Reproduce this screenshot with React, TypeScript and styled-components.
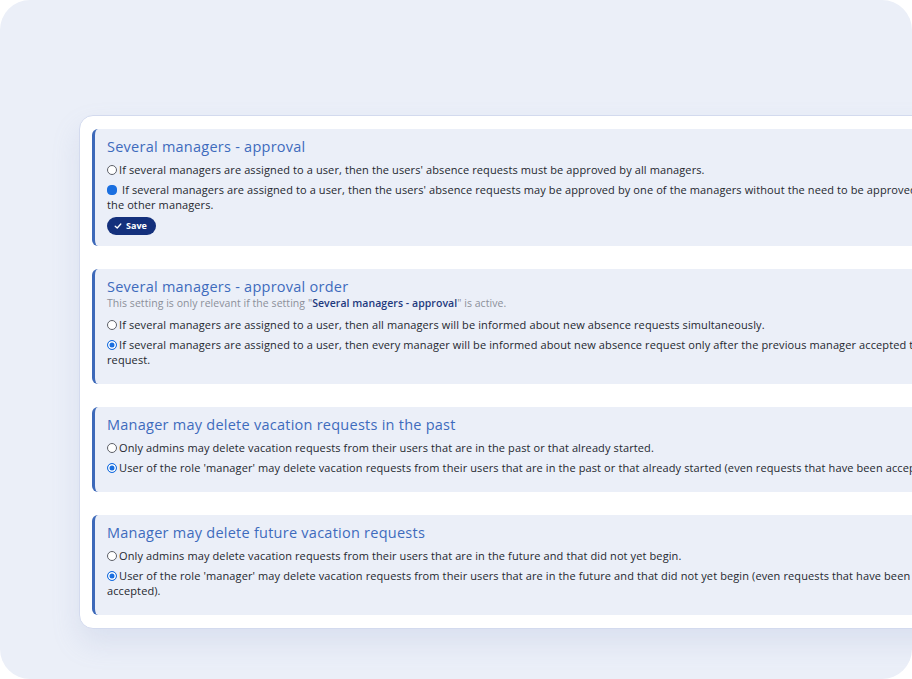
import React from "react";
import styled, { createGlobalStyle } from "styled-components";

const Global = createGlobalStyle`
  html, body { margin: 0; padding: 0; background: #ffffff; }
  body { overflow: hidden; font-family: "Open Sans", "Liberation Sans", sans-serif; }
`;

const Backdrop = styled.div`
  width: 912px;
  height: 679px;
  box-sizing: border-box;
  background: #ebeff8;
  border-radius: 30px;
  padding: 115px 0 0 79px;
  overflow: hidden;
`;

const Card = styled.div`
  width: 900px;
  box-sizing: border-box;
  background: #ffffff;
  border: 1px solid #d3daee;
  border-radius: 14px;
  padding: 13px 12px 13px 12px;
  display: flex;
  flex-direction: column;
  gap: 23px;
  box-shadow: 0 14px 28px rgba(140, 155, 200, 0.18);
`;

const Section = styled.section<{ $tight?: boolean }>`
  background: #ebeff8;
  border-left: 3px solid #3d69b9;
  border-radius: 6px 0 0 6px;
  padding: 8px 12px ${(p) => (p.$tight ? "11px" : "17px")} 12px;
  display: flex;
  flex-direction: column;
  align-items: flex-start;
`;

const Title = styled.h3`
  margin: 0;
  font-size: 14.5px;
  line-height: 20px;
  font-weight: 500;
  color: #3e6bbd;
  letter-spacing: 0.25px;
`;

const Hint = styled.p`
  margin: 0 0 3px;
  font-size: 10.5px;
  line-height: 12px;
  color: #8b909a;
  letter-spacing: 0.05px;
`;

const HintLink = styled.span`
  color: #1f3a7e;
  font-weight: 600;
`;

const Option = styled.label`
  margin-top: 5px;
  display: block;
  font-size: 11px;
  line-height: 15px;
  color: #25282f;
  letter-spacing: 0.11px;
  max-width: 836px;
`;

const Radio = styled.span<{ $on?: boolean; $solid?: boolean }>`
  display: inline-block;
  box-sizing: border-box;
  width: 10px;
  height: 10px;
  margin: 0 2px -1px 0;
  border-radius: ${(p) => (p.$solid ? "4px" : "50%")};
  border: 1px solid ${(p) => (p.$on ? "#1a6fe0" : "#5d6068")};
  background: ${(p) => (p.$on ? "#1a6fe0" : "#ffffff")};
  box-shadow: ${(p) => (p.$on && !p.$solid ? "inset 0 0 0 1.5px #ffffff" : "none")};
`;

const SaveButton = styled.button`
  margin-top: 5px;
  height: 18px;
  padding: 0 9px 0 7px;
  border: none;
  border-radius: 9px;
  background: #14307c;
  color: #ffffff;
  font-family: "Open Sans", "Liberation Sans", sans-serif;
  font-size: 9px;
  line-height: 12px;
  font-weight: 700;
  display: flex;
  align-items: center;
  gap: 4px;
`;

const Check = () => (
  <svg width="8" height="8" viewBox="0 0 10 10" fill="none">
    <path d="M1.5 5.2 L4 7.5 L8.5 2.5" stroke="#ffffff" strokeWidth="1.6" strokeLinecap="round" strokeLinejoin="round" />
  </svg>
);

export default function App() {
  return (
    <>
      <Global />
      <Backdrop>
        <Card>
          <Section $tight>
            <Title>Several managers - approval</Title>
            <Option>
              <Radio />
              If several managers are assigned to a user, then the users' absence requests must be approved by all managers.
            </Option>
            <Option>
              <Radio $on $solid />
              {" "}If several managers are assigned to a user, then the users' absence requests may be approved by one of the managers without the need to be approved by the other managers.
            </Option>
            <SaveButton>
              <Check />
              Save
            </SaveButton>
          </Section>

          <Section>
            <Title>Several managers - approval order</Title>
            <Hint>
              This setting is only relevant if the setting "<HintLink>Several managers - approval</HintLink>" is active.
            </Hint>
            <Option>
              <Radio />
              If several managers are assigned to a user, then all managers will be informed about new absence requests simultaneously.
            </Option>
            <Option>
              <Radio $on />
              If several managers are assigned to a user, then every manager will be informed about new absence request only after the previous manager accepted the request.
            </Option>
          </Section>

          <Section>
            <Title>Manager may delete vacation requests in the past</Title>
            <Option>
              <Radio />
              Only admins may delete vacation requests from their users that are in the past or that already started.
            </Option>
            <Option>
              <Radio $on />
              User of the role 'manager' may delete vacation requests from their users that are in the past or that already started (even requests that have been accepted).
            </Option>
          </Section>

          <Section>
            <Title>Manager may delete future vacation requests</Title>
            <Option>
              <Radio />
              Only admins may delete vacation requests from their users that are in the future and that did not yet begin.
            </Option>
            <Option>
              <Radio $on />
              User of the role 'manager' may delete vacation requests from their users that are in the future and that did not yet begin (even requests that have been accepted).
            </Option>
          </Section>
        </Card>
      </Backdrop>
    </>
  );
}
